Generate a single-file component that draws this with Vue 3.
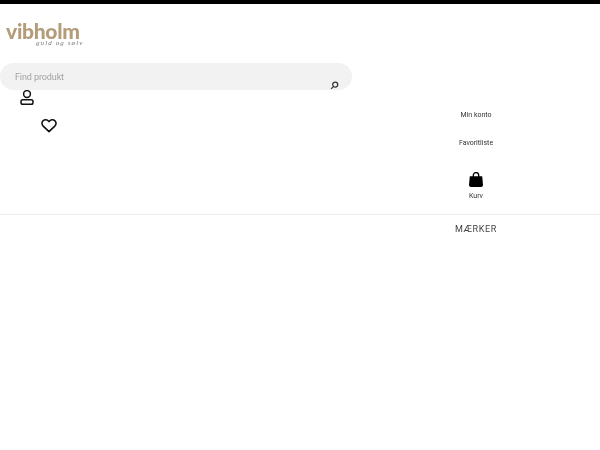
<script setup>
const accountLabel = 'Min konto'
</script>

<template>
  <div class="page">
    <div class="topbar"></div>
    <div class="logo">
      <span class="logo-name">vibholm</span>
      <span class="logo-sub">guld og sølv</span>
    </div>
    <div class="search">
      <span class="placeholder">Find produkt</span>
      <svg class="search-icon" viewBox="0 0 10 10" width="9" height="9" fill="none" stroke="#333" stroke-width="1.4">
        <circle cx="5.8" cy="4" r="2.8" />
        <path d="M3.800 6.200 1.200 8.800" />
      </svg>
    </div>
    <div class="main">
      <div class="icons">
        <svg class="user" viewBox="0 0 14 15" width="14" height="15" fill="none" stroke="#111" stroke-width="1.5">
          <circle cx="7" cy="4" r="3.4" />
          <rect x="1" y="9.700" width="12" height="4.500" rx="1.800" />
        </svg>
        <svg class="heart" viewBox="0 0 16 15" width="16" height="15" fill="none" stroke="#111" stroke-width="1.600">
          <path d="M8 13.600 2.200 8.100C.5 6.400.6 3.900 2.200 2.600 3.900 1.200 6.500 1.500 8 3.600 9.500 1.500 12.100 1.200 13.800 2.600 15.400 3.900 15.500 6.400 13.800 8.100Z" stroke-linejoin="round" />
        </svg>
      </div>
      <div class="links">
        <div class="label account">{{ accountLabel }}</div>
        <div class="label favorites">Favoritliste</div>
        <svg class="bag" viewBox="0 0 14 15" width="14" height="15">
          <path fill="#000" d="M.8 4.300h12.400l.8 8.700a2 2 0 0 1-2 2H2a2 2 0 0 1-2-2Z" />
          <path fill="none" stroke="#000" stroke-width="1.300" d="M4.300 5V3.300a2.700 2.700 0 0 1 5.400 0V5" />
        </svg>
        <div class="label cart">Kurv</div>
      </div>
    </div>
    <div class="divider"></div>
    <div class="brands-row">
      <span class="brands">MÆRKER</span>
    </div>
  </div>
</template>

<style scoped>
.page {
  width: 600px;
  height: 450px;
  background: #fff;
  font-family: Roboto, "Liberation Sans", sans-serif;
  overflow: hidden;
}
.topbar {
  height: 4px;
  background: #000;
}
.logo {
  height: 59px;
  box-sizing: border-box;
  padding: 17px 0 0 6px;
  display: flex;
  flex-direction: column;
  filter: blur(0.3px);
}
.logo-name {
  font-family: Lato, "Liberation Sans", sans-serif;
  font-weight: 900;
  font-size: 21px;
  line-height: 20px;
  letter-spacing: -0.3px;
  color: #b39c78;
}
.logo-sub {
  font-family: "Liberation Serif", serif;
  font-style: italic;
  font-size: 7px;
  line-height: 6px;
  color: #777;
  letter-spacing: 1.1px;
  margin: -1px 0 0 30px;
}
.search {
  position: relative;
  width: 352px;
  height: 27px;
  border-radius: 14px;
  background: #f2f2f2;
  display: flex;
  align-items: center;
  padding-left: 15px;
  box-sizing: border-box;
}
.placeholder {
  font-size: 9px;
  letter-spacing: -0.1px;
  color: #a3a3a3;
  filter: blur(0.25px);
}
.search-icon {
  position: absolute;
  left: 330px;
  top: 18px;
}
.main {
  display: grid;
  grid-template-columns: 352px 248px;
  height: 124px;
}
.icons {
  display: flex;
  flex-direction: column;
  align-items: flex-start;
}
.user {
  margin-left: 20px;
}
.heart {
  margin: 13px 0 0 41px;
}
.links {
  display: flex;
  flex-direction: column;
  align-items: center;
}
.label {
  font-size: 7px;
  line-height: 10px;
  color: #333;
  filter: blur(0.25px);
}
.account {
  margin-top: 20px;
}
.favorites {
  margin-top: 18px;
}
.bag {
  margin-top: 24px;
}
.cart {
  margin-top: 4px;
}
.divider {
  height: 1px;
  background: #ececec;
}
.brands-row {
  display: grid;
  grid-template-columns: 352px 248px;
  padding-top: 8px;
}
.brands {
  grid-column: 2;
  text-align: center;
  font-size: 9px;
  line-height: 12px;
  letter-spacing: 0.65px;
  color: #444;
  filter: blur(0.2px);
}
</style>
